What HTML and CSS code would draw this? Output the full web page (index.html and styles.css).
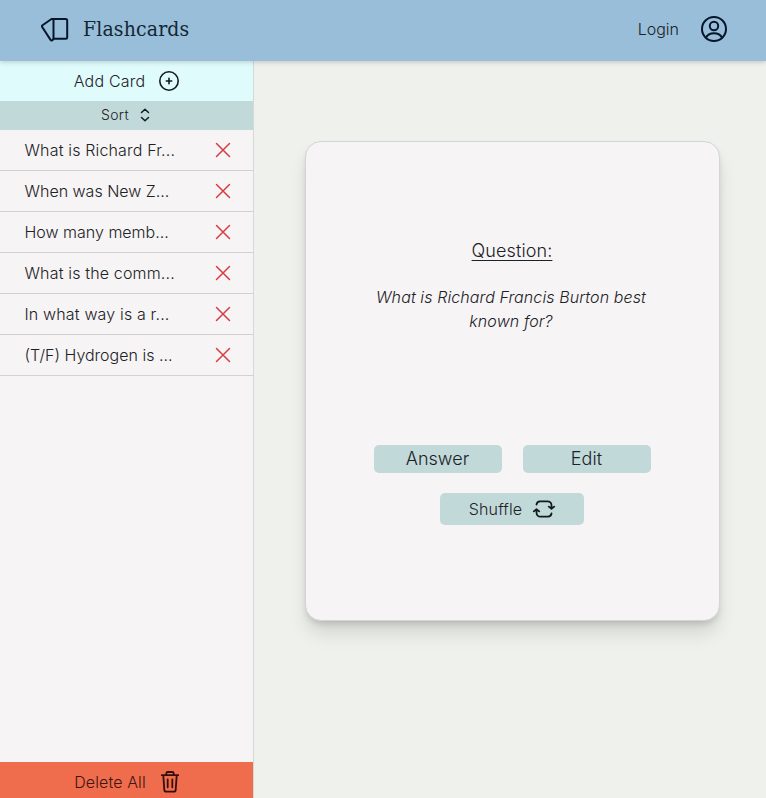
FILE: index.html
```html
<!DOCTYPE html>
<html lang="en">
<head>
<meta charset="utf-8">
<title>Flashcards</title>
<link rel="stylesheet" href="styles.css">
</head>
<body>
<header class="topbar">
  <div class="brand">
    <svg class="logo" width="28" height="26" viewBox="0 0 28 26"><path d="M12.500 2h12.200a1.500 1.500 0 0 1 1.500 1.500v16.800a1.500 1.500 0 0 1-1.500 1.500H12.500zM12.500 2h-2L1.500 8.200a1.300 1.300 0 0 0-.3 1.800l8.200 12.600c1 1.400 2.100 1.200 3.100-.8"/></svg>
    <h1>Flashcards</h1>
  </div>
  <div class="account">
    <span>Login</span>
    <svg class="avatar" width="28" height="28" viewBox="0 0 28 28"><circle cx="14" cy="14" r="12"/><circle cx="14" cy="11" r="4.200"/><path d="M6 22.700c1.400-3 4.400-4.500 8-4.500s6.600 1.500 8 4.500"/></svg>
  </div>
</header>
<div class="layout">
  <aside class="sidebar">
    <button class="add">Add Card
      <svg width="22" height="22" viewBox="0 0 22 22"><circle cx="11" cy="11" r="9.200"/><path d="M11 8.300v5.400M8.300 11h5.400"/></svg>
    </button>
    <button class="sort">Sort
      <svg width="12" height="16" viewBox="0 0 12 16"><path d="m2.500 5.500 3.500-3.300 3.500 3.300M2.500 10.500 6 13.800l3.500-3.300"/></svg>
    </button>
    <ul class="cards">
      <li><span class="wide">What is Richard Fr...</span><svg width="16" height="16" viewBox="0 0 16 16"><path d="m1.500 1.500 13 13m0-13-13 13"/></svg></li>
      <li><span>When was New Z...</span><svg width="16" height="16" viewBox="0 0 16 16"><path d="m1.500 1.500 13 13m0-13-13 13"/></svg></li>
      <li><span>How many memb...</span><svg width="16" height="16" viewBox="0 0 16 16"><path d="m1.500 1.500 13 13m0-13-13 13"/></svg></li>
      <li><span class="wide">What is the comm...</span><svg width="16" height="16" viewBox="0 0 16 16"><path d="m1.500 1.500 13 13m0-13-13 13"/></svg></li>
      <li><span class="wide">In what way is a r...</span><svg width="16" height="16" viewBox="0 0 16 16"><path d="m1.500 1.500 13 13m0-13-13 13"/></svg></li>
      <li><span>(T/F) Hydrogen is ...</span><svg width="16" height="16" viewBox="0 0 16 16"><path d="m1.500 1.500 13 13m0-13-13 13"/></svg></li>
    </ul>
    <button class="delete">Delete All
      <svg width="20" height="24" viewBox="0 0 20 24"><path d="M1.800 5.200h16.400M3.300 5.200l1 14.600a2 2 0 0 0 2 1.800h7.400a2 2 0 0 0 2-1.800l1-14.600M6.300 5V3.500A1.500 1.500 0 0 1 7.800 2h4.400a1.500 1.500 0 0 1 1.500 1.500V5M7.700 9.300v8M12.300 9.300v8"/></svg>
    </button>
  </aside>
  <main class="stage">
    <section class="flashcard">
      <h2>Question:</h2>
      <p>What is Richard Francis Burton best known for?</p>
      <div class="actions">
        <button>Answer</button>
        <button>Edit</button>
      </div>
      <button class="shuffle">Shuffle
        <svg width="24" height="20" viewBox="0 0 24 20"><path d="M4.500 5.500A3.800 3.800 0 0 1 8 2.300h7.500a4 4 0 0 1 4 4V9.500M16.800 7.600l2.700 2.200 2.700-2.200M19.500 14.500a3.800 3.800 0 0 1-3.500 3.200H8.500a4 4 0 0 1-4-4V10.500M1.800 12.400l2.700-2.200 2.700 2.200"/></svg>
      </button>
    </section>
  </main>
</div>
</body>
</html>
```
FILE: styles.css
```css
* { box-sizing: border-box; margin: 0; padding: 0; }
body {
  height: 798px;
  display: flex;
  flex-direction: column;
  overflow: hidden;
  background: #eff1ec;
  color: #1c2226;
  font: 300 16px/24px Inter, sans-serif;
}
button { border: 0; font: inherit; color: inherit; display: flex; align-items: center; justify-content: center; }
svg { fill: none; stroke: #111b20; stroke-width: 1.6; stroke-linecap: round; stroke-linejoin: round; flex: none; }
.topbar {
  height: 61px;
  flex: none;
  display: flex;
  justify-content: space-between;
  padding: 0 38px 3px 41px;
  background: #98bed9;
  box-shadow: 0 1px 5px rgba(0, 0, 0, .2);
  z-index: 1;
}
.brand, .account { display: flex; align-items: center; }
.brand { gap: 14px; }
.account { gap: 21px; }
.logo, .avatar { stroke: #06162a; stroke-width: 2; }
.logo { margin-top: 1px; }
h1 { font: 400 21px/32px "DejaVu Serif Condensed", "DejaVu Serif", serif; letter-spacing: .15px; color: #142634; }
.layout { flex: 1; min-height: 0; display: flex; }
.sidebar {
  width: 254px;
  display: flex;
  flex-direction: column;
  background: #f6f4f5;
  border-right: 1px solid #d3d9d9;
}
.add { height: 40px; gap: 13px; padding-left: 1px; background: #e0fbfc; letter-spacing: .2px; }
.sort { height: 29px; gap: 10px; padding: 0 1px 1px 0; background: #c2d9da; font-size: 14px; letter-spacing: .3px; }
.sort svg { stroke-width: 1.5; }
.cards { list-style: none; flex: 1; }
.cards li {
  height: 41px;
  display: flex;
  align-items: center;
  justify-content: space-between;
  padding: 0 22px 0 24.500px;
  border-bottom: 1px solid #cfd1d3;
}
.cards .wide { letter-spacing: .16px; }
.cards svg { stroke: #d73d42; stroke-width: 1.5; }
.delete { height: 36px; gap: 14px; padding: 4px 0 0 1px; background: #ef6c4d; color: #40150f; letter-spacing: .1px; }
.delete svg { stroke: #35100b; stroke-width: 1.8; }
.stage { flex: 1; padding: 80px 46px 0 51px; }
.flashcard {
  width: 415px;
  height: 480px;
  padding: 95px 1px 0 0;
  display: flex;
  flex-direction: column;
  align-items: center;
  background: #f6f4f5;
  border: 1px solid #d3d4d5;
  border-radius: 16px;
  box-shadow: 0 14px 20px -3px rgba(0, 0, 0, .13), 0 4px 7px -2px rgba(0, 0, 0, .16);
}
h2 { font-size: 18px; font-weight: 300; line-height: 28px; letter-spacing: .1px; text-decoration: underline; text-underline-offset: 3px; text-decoration-thickness: 1px; }
.flashcard p { width: 288px; height: 160px; padding: 20px 2px 0 0; text-align: center; font-style: italic; letter-spacing: .1px; }
.actions { display: flex; gap: 21px; margin-top: 20px; }
.actions button { width: 128px; height: 28px; border-radius: 5px; background: #c2d9da; font-size: 18px; letter-spacing: .05px; }
.shuffle { width: 144px; height: 32px; margin-top: 20px; gap: 10px; padding-left: 1px; border-radius: 5px; background: #c2d9da; letter-spacing: .12px; }
.shuffle svg { stroke-width: 1.8; }
```
